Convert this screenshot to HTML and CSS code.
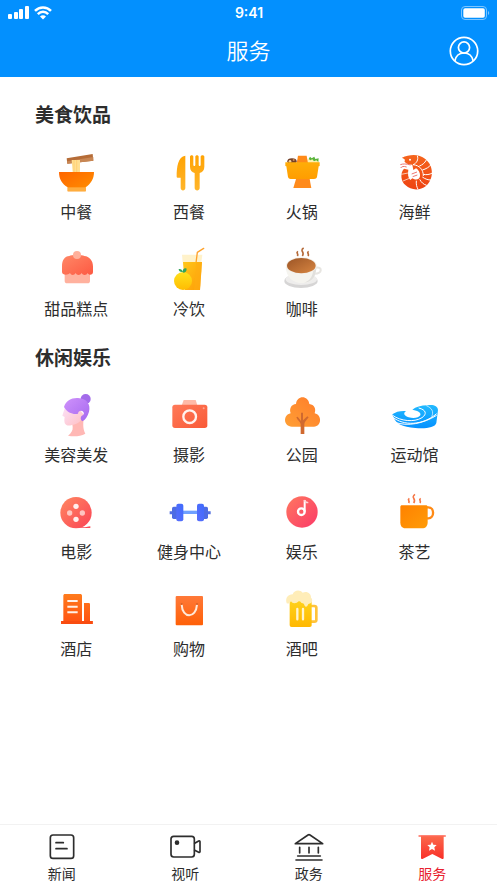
FILE: index.html
```html
<!DOCTYPE html>
<html lang="zh-CN">
<head>
<meta charset="utf-8">
<meta name="viewport" content="width=device-width, initial-scale=1">
<title>服务</title>
<link rel="stylesheet" href="styles.css">
</head>
<body>
<svg class="defs" width="0" height="0" aria-hidden="true">
  <defs>
    <linearGradient id="orange" x1="1" y1="0" x2="0" y2="1"><stop offset="0" stop-color="#ff7c2a"/><stop offset="1" stop-color="#ff9f35"/></linearGradient>
    <linearGradient id="bowl" x1="0" y1="0" x2="1" y2="1"><stop offset="0" stop-color="#ff6500"/><stop offset="1" stop-color="#ff9200"/></linearGradient>
    <linearGradient id="amber" x1="0" y1="0" x2="0" y2="1"><stop offset="0" stop-color="#ffa303"/><stop offset="1" stop-color="#ffb52b"/></linearGradient>
    <linearGradient id="pot" x1="0" y1="0" x2="0" y2="1"><stop offset="0" stop-color="#ffad08"/><stop offset="1" stop-color="#ff9d00"/></linearGradient>
    <linearGradient id="shrimp" x1="0" y1="0" x2="0" y2="1"><stop offset="0" stop-color="#f5651d"/><stop offset="1" stop-color="#ee4312"/></linearGradient>
    <linearGradient id="coral" x1="0" y1="0" x2="1" y2="1"><stop offset="0" stop-color="#ff8867"/><stop offset="1" stop-color="#fd5942"/></linearGradient>
    <linearGradient id="juice" x1="0" y1="0" x2="1" y2="1"><stop offset="0" stop-color="#ffc71b"/><stop offset="1" stop-color="#ff9b05"/></linearGradient>
    <linearGradient id="lemon" x1="0" y1="0" x2="0" y2="1"><stop offset="0" stop-color="#ffe11c"/><stop offset="1" stop-color="#ffbc02"/></linearGradient>
    <linearGradient id="coffee" x1="0" y1="0" x2="1" y2="1"><stop offset="0" stop-color="#9c5526"/><stop offset="1" stop-color="#d88642"/></linearGradient>
    <linearGradient id="hair" x1="0" y1="0" x2="1" y2="1"><stop offset="0" stop-color="#cf92fb"/><stop offset="1" stop-color="#a568ef"/></linearGradient>
    <linearGradient id="skin" x1="0" y1="0" x2="1" y2="1"><stop offset="0" stop-color="#fbe3fb"/><stop offset="1" stop-color="#ffbfc2"/></linearGradient>
    <linearGradient id="camera" x1="0" y1="0" x2="1" y2="1"><stop offset="0" stop-color="#ff7a59"/><stop offset="1" stop-color="#f95a37"/></linearGradient>
    <linearGradient id="wave" x1="0" y1="0" x2="0" y2="1"><stop offset="0" stop-color="#22baff"/><stop offset="1" stop-color="#0591ff"/></linearGradient>
    <linearGradient id="film" x1="0" y1="0" x2="1" y2="1"><stop offset="0" stop-color="#ff8862"/><stop offset="1" stop-color="#fa4355"/></linearGradient>
    <linearGradient id="music" x1="0" y1="0" x2="1" y2="1"><stop offset="0" stop-color="#ff7760"/><stop offset="1" stop-color="#fb3a68"/></linearGradient>
    <linearGradient id="blue" x1="1" y1="0" x2="0" y2="1"><stop offset="0" stop-color="#3f6bfd"/><stop offset="1" stop-color="#596efb"/></linearGradient>
    <linearGradient id="mug" x1="0" y1="0" x2="1" y2="1"><stop offset="0" stop-color="#ff8100"/><stop offset="1" stop-color="#ff9c08"/></linearGradient>
    <linearGradient id="hotel" x1="0" y1="0" x2="0" y2="1"><stop offset="0" stop-color="#ff7b1c"/><stop offset="1" stop-color="#ff5011"/></linearGradient>
    <linearGradient id="bag" x1="0" y1="0" x2="0" y2="1"><stop offset="0" stop-color="#ff7938"/><stop offset="1" stop-color="#ff6007"/></linearGradient>
    <linearGradient id="beer" x1="0" y1="0" x2="0" y2="1"><stop offset="0" stop-color="#ffd21b"/><stop offset="1" stop-color="#ffb801"/></linearGradient>
    <linearGradient id="ribbon" x1="0" y1="0" x2="0" y2="1"><stop offset="0" stop-color="#fb6a4c"/><stop offset="1" stop-color="#f92f28"/></linearGradient>
  </defs>
</svg>

<header class="header">
  <div class="status">
    <div class="signals">
      <svg width="22" height="14" viewBox="0 0 22 14" fill="#fff" aria-hidden="true"><rect x="0" y="8" width="4" height="5" rx="1"/><rect x="6" y="6" width="4" height="7" rx="1"/><rect x="11" y="3" width="4" height="10" rx="1"/><rect x="17" y="0" width="4" height="13" rx="1"/></svg>
      <svg width="18" height="14" viewBox="0 0 18 14" fill="none" stroke="#fff" stroke-width="2.500" aria-hidden="true"><path d="M1 4.900C5.400.3 12.600.3 17 4.900M3.800 8.100c3-3 7.400-3 10.400 0"/><path d="M6 10.400c1.800-1.700 4.200-1.700 6 0L9 13.500z" fill="#fff" stroke="none"/></svg>
    </div>
    <time class="clock">9:41</time>
    <svg class="battery" width="29" height="14" viewBox="0 0 29 14" aria-hidden="true"><rect x=".5" y=".5" width="25" height="13" rx="3.500" fill="none" stroke="#7cc5ff"/><rect x="2.300" y="2.300" width="21.500" height="9.400" rx="1.800" fill="#fff"/><path d="M27 5v4c1.600-.6 1.600-3.400 0-4z" fill="#7cc5ff"/></svg>
  </div>
  <div class="titlebar">
    <h1 class="title">服务</h1>
    <button class="profile" type="button" aria-label="个人中心">
      <svg width="30" height="30" viewBox="0 0 30 30" fill="none" stroke="#fff" stroke-width="1.700" aria-hidden="true"><circle cx="15" cy="15" r="13.700"/><circle cx="15" cy="11.500" r="5.600"/><path d="M5.800 25c1-5 4.600-8 9.200-8s8.200 3 9.200 8"/></svg>
    </button>
  </div>
</header>

<main class="content">
  <section class="group">
    <h2 class="heading">美食饮品</h2>
    <div class="grid">
      <a class="item" href="#"><svg class="icon" viewBox="67 162 144 144" aria-hidden="true"><path d="M111 190l78-13 2 20-78 9z" fill="#b56c37"/><path d="M112 199l79-13v11l-78 9z" fill="#c88653"/><path d="M126 195h25v36h-22z" fill="#ffdf91"/><path d="M133 195v36M141 195v36" stroke="#ffc968" stroke-width="2"/><path d="M88 231h105c0 21-10 36-25 46v12h-54v-12c-17-10-26-25-26-46z" fill="url(#bowl)"/><path d="M114 277h54v12h-54z" fill="#ffad3e"/></svg><span>中餐</span></a>
      <a class="item" href="#"><svg class="icon" viewBox="405 162 144 144" aria-hidden="true"><path d="M466 182v97c0 10-14 10-14 0v-31h-9c-2 0-3-1-3-3 0-29 4-60 26-63z" fill="url(#amber)"/><path d="M480 185c0-6 10-6 10 0v24c0 5 6 5 6 0v-24c0-6 10-6 10 0v24c0 5 6 5 6 0v-24c0-6 11-6 11 0v30c0 11-6 16-14 19v45c0 10-15 10-15 0v-45c-8-3-14-8-14-19z" fill="url(#amber)"/></svg><span>西餐</span></a>
      <a class="item" href="#"><svg class="icon" viewBox="24 12 144 144" aria-hidden="true"><ellipse cx="66" cy="49" rx="14" ry="9" fill="#744027"/><circle cx="60" cy="49" r="4" fill="#f3cf98"/><circle cx="71" cy="45" r="3" fill="#c98b58"/><path d="M110 55c0-12 6-15 13-12 7-5 11-1 14 2 6-1 10 4 10 10z" fill="#fff1ab"/><path d="M116 42l4-7 5 5 8-5 3 7 10-2-1 11-6-5-7 3-5-6-6 3z" fill="#59b43c"/><path d="M84 32h26l4 23H80z" fill="#ff8a19"/><path d="M46 52h103v11l-3 1-5 32c-1 4-4 6-9 6H62c-4 0-7-2-8-6l-5-32-3-1z" fill="url(#pot)"/><path d="M78 102h41l5 27H70z" fill="#ff8b1c"/></svg><span>火锅</span></a>
      <a class="item" href="#"><svg class="icon" viewBox="362 12 144 144" aria-hidden="true"><path d="M395 38c22-10 50-13 70 4 27 21 25 62 2 81-18 15-46 13-61-2-15-11-17-38-5-50l13 3c-2 14-1 24 6 31l6-5 6 3c10 3 17-3 17-10 1-10-5-19-12-23l-8 5-3-16c-10 0-19-2-24-10 3-4 3-7-8-11z" fill="url(#shrimp)"/><path d="M441 32c4 12-2 23-13 27 20 2 31 15 31 34" fill="none" stroke="#fff" stroke-width="3"/><path d="M447 63c9-3 16-9 21-18M456 75c11-3 21-9 26-16M459 88c10 2 18 1 27-4M456 96c10 7 18 9 26 9M448 103c5 9 11 15 21 18M438 107c-1 11 1 18 5 26" fill="none" stroke="#fff" stroke-width="3"/><circle cx="419" cy="44" r="3" fill="#fff"/><path d="M421 60c-14-4-23-4-31-1M409 66c-9-3-15-2-18 3M424 87l16-6M427 95l14-5" fill="none" stroke="#ed7773" stroke-width="3"/><path d="M393 88l20-4M398 108l19-8" stroke="#fff" stroke-width="2"/></svg><span>海鲜</span></a>
      <a class="item" href="#"><svg class="icon" viewBox="67 18 144 144" aria-hidden="true"><path d="M105 98h76v25c0 4-3 7-7 7h-62c-4 0-7-3-7-7z" fill="#ffb19e"/><path d="M119 48c4-4 39-4 45 0 15 1 26 14 26 31v17c0 10-13 11-16 3-3 8-15 8-18 0-4 8-15 8-18 0-4 8-14 8-17 0-7 8-24 6-24-3V79c0-19 8-30 22-31z" fill="url(#coral)"/><circle cx="142" cy="45" r="12" fill="#ffb09b"/></svg><span>甜品糕点</span></a>
      <a class="item" href="#"><svg class="icon" viewBox="405 18 144 144" aria-hidden="true"><path d="M456 44h61l-3 23h-56z" fill="#fff2ca"/><path d="M498 69l4-32 19-12" fill="none" stroke="#ffa22b" stroke-width="4" stroke-linecap="round" stroke-linejoin="round"/><path d="M459 66h57l-6 84h-45z" fill="url(#juice)"/><path d="M499 66l-7 84h18l6-84z" fill="#ffae12" opacity=".6"/><circle cx="459" cy="123" r="27" fill="url(#lemon)"/><path d="M459 98c-2-10-7-12-13-11 0 6 5 10 12 9 0-9 5-13 12-10 0 8-4 12-11 12z" fill="#34a45c"/></svg><span>冷饮</span></a>
      <a class="item" href="#"><svg class="icon" viewBox="24 18 144 144" aria-hidden="true"><ellipse cx="93" cy="123" rx="50" ry="21" fill="#d6d5d5"/><ellipse cx="94" cy="118" rx="47" ry="17" fill="#eeedec"/><path d="M136 83c22-5 23 19-5 18" fill="none" stroke="#e7e5e1" stroke-width="6"/><path d="M47 80h92c0 25-11 47-34 49-33 3-56-15-58-49z" fill="#f5f4ef"/><path d="M130 91c-3 22-12 32-28 37 26-1 37-22 37-48z" fill="#e1e0dd"/><ellipse cx="94" cy="77" rx="46" ry="25" fill="#f3eee6"/><ellipse cx="94" cy="77" rx="43" ry="23" fill="url(#coffee)"/><path d="M84 34c-8 5 3 6-2 14M101 24c-14 8 5 12-4 24M116 34c-8 5 3 6-2 14" fill="none" stroke="#b56a39" stroke-width="5"/></svg><span>咖啡</span></a>
    </div>
  </section>

  <section class="group">
    <h2 class="heading">休闲娱乐</h2>
    <div class="grid">
      <a class="item" href="#"><svg class="icon" viewBox="67 21 144 144" aria-hidden="true"><path d="M126 101l37-10c-3 25-4 40 4 55-15 8-34 9-52 6 10-8 15-16 14-26z" fill="#ffb8b5"/><path d="M108 61l-10 31 7 4c-4 22 4 29 22 24 20-3 31-15 36-31l-23-27z" fill="url(#skin)"/><circle cx="168" cy="42" r="15" fill="#a36bea"/><path d="M103 66c6-20 22-28 42-27 26 1 39 20 33 41-4 14-11 25-20 29-7-5-6-15 1-18 7-4 3-14-5-14-5 0-8 2-9 9-13 3-31-1-42-20z" fill="url(#hair)"/></svg><span>美容美发</span></a>
      <a class="item" href="#"><svg class="icon" viewBox="405 21 144 144" aria-hidden="true"><path d="M461 45h36l6 19h-49z" fill="#ffbaa7"/><rect x="427" y="59" width="105" height="70" rx="8" fill="url(#camera)"/><circle cx="479" cy="95" r="19" fill="none" stroke="#fff3ee" stroke-width="7"/><circle cx="521" cy="70" r="3" fill="#ffa48f"/></svg><span>摄影</span></a>
      <a class="item" href="#"><svg class="icon" viewBox="24 21 144 144" aria-hidden="true"><path d="M78 57c2-27 37-27 40 0 15 2 21 14 16 28 23 5 21 40-2 40H66c-26 0-28-35-4-40-5-14 2-27 16-28z" fill="url(#orange)"/><path d="M92 147v-30c-2-8-10-11-13-20l4-2 10 13V83h6v23l13-12 4 3c-8 10-13 14-13 21v29z" fill="#d0692f"/></svg><span>公园</span></a>
      <a class="item" href="#"><svg class="icon" viewBox="362 21 144 144" aria-hidden="true"><path d="M366 88c10-8 23-11 41-10-10 7-5 15 8 19 16 4 31 1 35-6 3-8-6-14-24-17 10-8 26-13 46-13 17-3 30 2 31 14l-5 39c-4 14-33 18-63 15-38-2-62-12-69-41z" fill="url(#wave)"/><path d="M367 91c23 17 64 22 88 7 16-11 12-24-10-29M368 97c31 25 87 26 131-11M374 112c38 13 85 4 125-21" fill="none" stroke="#fff" stroke-width="3"/><path d="M468 62c17 7 23 18 16 33" fill="none" stroke="#fff" stroke-width="2"/></svg><span>运动馆</span></a>
      <a class="item" href="#"><svg class="icon" viewBox="67 12 144 144" aria-hidden="true"><path d="M140 127h26c6 0 8-3 16-3v5h-42z" fill="#f94c59"/><circle cx="139" cy="83" r="47" fill="url(#film)"/><g fill="#ffefed"><circle cx="139" cy="64" r="8"/><circle cx="139" cy="103" r="8"/><circle cx="120" cy="84" r="8" opacity=".7"/><circle cx="158" cy="84" r="8" opacity=".7"/></g></svg><span>电影</span></a>
      <a class="item" href="#"><svg class="icon" viewBox="405 12 144 144" aria-hidden="true"><rect x="457" y="77" width="48" height="10" fill="#6fa0ff"/><path d="M419 79h8v9h-8M534 79h8v9h-8" fill="#5370df"/><rect x="426" y="65" width="17" height="37" rx="5" fill="#4d6ce4"/><rect x="517" y="65" width="17" height="37" rx="5" fill="#4d6ce4"/><rect x="439" y="56" width="21" height="53" rx="6" fill="url(#blue)"/><rect x="501" y="56" width="21" height="53" rx="6" fill="url(#blue)"/></svg><span>健身中心</span></a>
      <a class="item" href="#"><svg class="icon" viewBox="24 12 144 144" aria-hidden="true"><circle cx="96" cy="81" r="47" fill="url(#music)"/><circle cx="94" cy="80" r="10" fill="none" stroke="#fff" stroke-width="7"/><path d="M104 80V45" stroke="#fff" stroke-width="6"/><path d="M103 45c2 8 6 8 12 8" fill="none" stroke="#ffd4d5" stroke-width="4"/></svg><span>娱乐</span></a>
      <a class="item" href="#"><svg class="icon" viewBox="362 12 144 144" aria-hidden="true"><path d="M467 67h7c19 0 19 33 0 33h-7" fill="none" stroke="#ff8a15" stroke-width="7"/><path d="M390 66c0-3 2-5 5-5h71c4 0 6 2 6 5v45c0 12-6 19-17 19h-50c-10 0-15-7-15-18z" fill="url(#mug)"/><path d="M417 40c-8 5 3 6-2 14M434 28c-15 10 6 13-4 26M451 40c-8 5 3 6-2 14" fill="none" stroke="#f57645" stroke-width="5"/></svg><span>茶艺</span></a>
      <a class="item" href="#"><svg class="icon" viewBox="37 18 144 144" aria-hidden="true"><path d="M71 47c0-3 2-5 5-5h45c4 0 6 2 6 5v76h6V69h14c3 0 4 2 4 4v50h8v9H64v-9h7z" fill="url(#hotel)"/><path d="M83 63h31M83 80h31M83 97h31" stroke="#fff1e8" stroke-width="6"/><path d="M64 123h95v9H64z" fill="#f94c10"/></svg><span>酒店</span></a>
      <a class="item" href="#"><svg class="icon" viewBox="375 18 144 144" aria-hidden="true"><rect x="407" y="48" width="82" height="88" rx="3" fill="url(#bag)"/><path d="M425 74c2 42 43 42 46 0" fill="none" stroke="#ffe9d8" stroke-width="6"/><circle cx="425" cy="72" r="3" fill="#d66127"/><circle cx="471" cy="72" r="3" fill="#d66127"/></svg><span>购物</span></a>
      <a class="item" href="#"><svg class="icon" viewBox="714 18 144 144" aria-hidden="true"><path d="M810 78h13c4 0 6 2 6 5v37c0 3-2 5-6 5h-13" fill="none" stroke="#ffc33c" stroke-width="8"/><path d="M749 60h66v75c0 4-2 6-6 6h-54c-4 0-6-2-6-6z" fill="url(#beer)"/><path d="M740 70c-5-17 4-26 18-27 5-14 23-14 30-5 14-6 26 4 25 15 7 6 3 18-6 18-4 0-3 9-9 9-6 0-4-10-10-10s-5-7-12-6c-6 7-19 8-23 0-8 10-8 6-13 6z" fill="#ffedb8"/><path d="M772 87v31M789 87v31" stroke="#fff4cf" stroke-width="7" stroke-linecap="round"/></svg><span>酒吧</span></a>
    </div>
  </section>
</main>

<nav class="tabs" aria-label="主导航">
  <a class="tab" href="#"><svg class="tab-icon line" viewBox="48 33 96 96" aria-hidden="true"><rect x="61" y="45" width="70" height="70" rx="8"/><path d="M78 68h22M78 86h33"/></svg><span>新闻</span></a>
  <a class="tab" href="#"><svg class="tab-icon line" viewBox="418 33 96 96" aria-hidden="true"><rect x="424" y="49" width="70" height="62" rx="8"/><path d="M495 70l12-7c2-1 4 0 4 2v30c0 2-2 3-4 2l-12-6"/><circle cx="442" cy="68" r="4.500" fill="#2d2d2d"/></svg><span>视听</span></a>
  <a class="tab" href="#"><svg class="tab-icon line" viewBox="789 33 96 96" aria-hidden="true"><path d="M796 71l38-26q3-2 6 0l38 26zM809 82v17M837 82v17M865 82v17M803 108h68M798 120h78"/></svg><span>政务</span></a>
  <a class="tab active" href="#" aria-current="page"><svg class="tab-icon" viewBox="1159 33 96 96" aria-hidden="true"><path d="M1174 47h68v66c0 4-3 5-6 3l-28-14-28 14c-3 2-6 1-6-3z" fill="url(#ribbon)"/><path d="M1168 48h79" stroke="#ff6857" stroke-width="4" stroke-linecap="round"/><path d="M1207 65l4 9 10 1-7 7 2 10-9-5-9 5 2-10-7-7 10-1z" fill="#fff"/></svg><span>服务</span></a>
</nav>
</body>
</html>
```
FILE: styles.css
```css
* {
  box-sizing: border-box;
}

body {
  display: flex;
  flex-direction: column;
  min-height: 100vh;
  margin: 0;
  background: #fff;
  color: #2d2d2d;
  font-family: "Noto Sans CJK SC", sans-serif;
}

a {
  color: inherit;
  text-decoration: none;
}

svg {
  display: block;
}

.defs {
  position: absolute;
}

.header {
  background: #0390fe;
  color: #fff;
}

.status {
  display: grid;
  grid-template-columns: 1fr auto 1fr;
  align-items: center;
  padding: 0 7px 0 8px;
  height: 25px;
}

.signals {
  display: flex;
  gap: 4px;
}

.clock {
  font: 600 14px/24px Inter, sans-serif;
}

.battery {
  justify-self: end;
}

.titlebar {
  display: grid;
  grid-template-columns: 1fr auto 1fr;
  align-items: center;
  height: 52px;
  padding: 0 18px;
}

.title {
  grid-column: 2;
  margin: 0;
  padding-bottom: 4px;
  font-size: 22px;
  font-weight: 350;
  line-height: 32px;
}

.profile {
  justify-self: end;
  padding: 0;
  border: 0;
  background: none;
  cursor: pointer;
}

.content {
  display: flex;
  flex-direction: column;
  gap: 23px;
  padding: 23px 26px 24px 20px;
}

.heading {
  margin: 0 0 21px 15px;
  font-size: 19px;
  font-weight: 700;
  line-height: 28px;
}

.grid {
  display: grid;
  grid-template-columns: repeat(4, 1fr);
  row-gap: 23px;
}

.item {
  display: flex;
  flex-direction: column;
  align-items: center;
  gap: 2px;
  font-size: 16px;
  line-height: 24px;
}

.icon {
  width: 48px;
  height: 48px;
}

.tabs {
  display: grid;
  grid-template-columns: repeat(4, 1fr);
  margin-top: auto;
  padding: 6px 3px 0 0;
  border-top: 1px solid #f2f2f2;
}

.tab {
  display: flex;
  flex-direction: column;
  align-items: center;
  font-size: 14px;
  line-height: 20px;
}

.tab-icon {
  width: 32px;
  height: 32px;
}

.line {
  fill: none;
  stroke: #2d2d2d;
  stroke-width: 5;
  stroke-linecap: round;
  stroke-linejoin: round;
}

.active {
  color: #e8202e;
}
```
